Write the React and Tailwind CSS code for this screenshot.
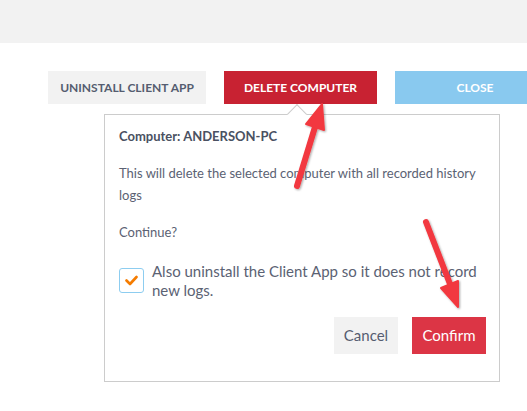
import React, { useState } from "react";

const font = { fontFamily: "Lato, 'Noto Sans', sans-serif" };

const Arrows = () => (
  <svg
    className="absolute left-0 top-0 pointer-events-none"
    width="527"
    height="411"
    viewBox="0 0 527 411"
  >
    <defs>
      <filter id="sh" x="-20%" y="-20%" width="140%" height="140%">
        <feDropShadow dx="1" dy="1" stdDeviation="1.2" floodColor="#000" floodOpacity="0.35" />
      </filter>
    </defs>
    <g filter="url(#sh)" fill="#f2393f" stroke="#f2393f" strokeLinecap="round" strokeLinejoin="round">
      <line x1="297" y1="186" x2="315" y2="127" strokeWidth="6" />
      <polygon points="322,104 324,130 306,124" strokeWidth="2" />
      <line x1="426" y1="222" x2="450" y2="284" strokeWidth="6" />
      <polygon points="458,307 441,288 458,281" strokeWidth="2" />
    </g>
  </svg>
);

export default function App() {
  const [checked, setChecked] = useState(true);

  return (
    <div className="relative w-[527px] h-[411px] bg-white overflow-hidden" style={font}>
      <div className="h-[43px] bg-[#f2f2f2]" />

      {/* action buttons */}
      <div className="flex gap-[18px] pl-[48px] mt-[28px]">
        <button className="h-[33px] w-[158px] shrink-0 bg-[#f2f2f2] text-[#555d70] text-[12px] font-bold uppercase">
          Uninstall Client App
        </button>
        <button className="h-[33px] w-[153px] shrink-0 bg-[#c82232] text-white text-[12px] font-bold uppercase">
          Delete Computer
        </button>
        <button className="h-[33px] w-[160px] shrink-0 bg-[#89c9ef] text-white text-[12px] font-bold uppercase">
          Close
        </button>
      </div>

      {/* confirmation popover */}
      <div className="relative ml-[104px] mt-[10px] w-[396px] h-[268px] border border-[#cccccc] bg-white px-[14px] pt-[11px]">
        <div className="absolute -top-[8px] left-[185px] w-[14px] h-[14px] rotate-45 bg-white border-l border-t border-[#cccccc]" />
        <p className="text-[13px] font-bold text-[#4a5162] leading-[20px]">Computer: ANDERSON-PC</p>
        <p className="mt-[16px] text-[13px] text-[#5b6273] leading-[22px]">
          This will delete the selected computer with all recorded history logs
        </p>
        <p className="mt-[15px] text-[13px] text-[#5b6273] leading-[22px]">Continue?</p>

        <label className="mt-[19px] flex items-start gap-[8px] cursor-pointer">
          <span
            onClick={() => setChecked(!checked)}
            className="mt-[6px] w-[25px] h-[25px] shrink-0 rounded-[3px] border border-[#8dcdf0] flex items-center justify-center bg-white"
          >
            {checked && (
              <svg width="13" height="11" viewBox="0 0 13 11">
                <path d="M1.5 5.5 L5 9 L11.5 2" fill="none" stroke="#f57c00" strokeWidth="2.6" strokeLinecap="round" strokeLinejoin="round" />
              </svg>
            )}
          </span>
          <span className="text-[15px] text-[#5b6273] leading-[19px] w-[330px]">
            Also uninstall the Client App so it does not record new logs.
          </span>
        </label>

        <div className="flex justify-end gap-[14px] mt-[17px] mr-[-1px]">
          <button className="h-[37px] w-[64px] bg-[#f2f2f2] text-[#555d70] text-[15px]">Cancel</button>
          <button className="h-[37px] w-[74px] bg-[#dc3545] text-white text-[15px]">Confirm</button>
        </div>
      </div>

      <Arrows />
    </div>
  );
}
